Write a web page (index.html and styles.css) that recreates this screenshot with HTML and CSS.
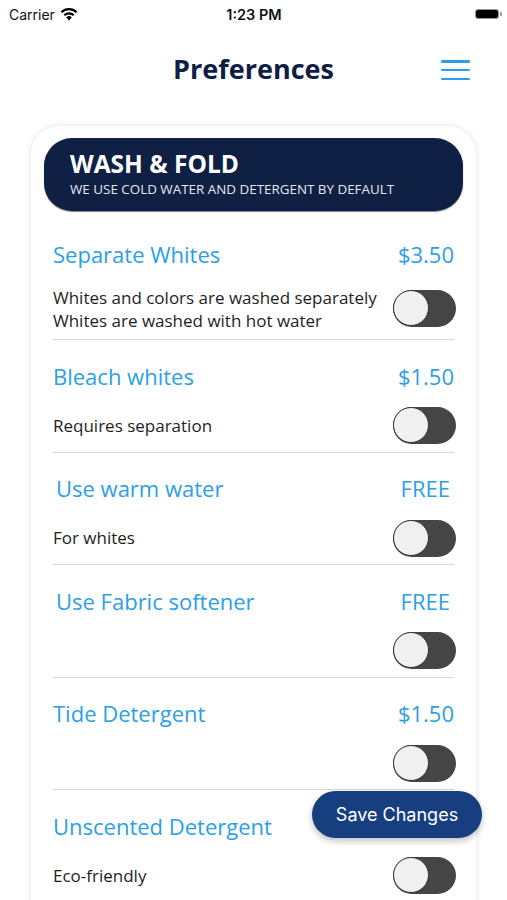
FILE: index.html
```html
<!DOCTYPE html>
<html lang="en">
<head>
    <meta charset="UTF-8">
    <meta name="viewport" content="width=device-width, initial-scale=1.0">
    <title>Preferences</title>
    <link rel="stylesheet" href="styles.css">
</head>
<body>
    <div class="status-bar">
        <div class="carrier">
            Carrier
            <svg class="wifi" width="18" height="13" viewBox="0 0 18 13">
                <path d="M9 12.5 L6.2 9.4 A4 4 0 0 1 11.8 9.4 Z" fill="#000"/>
                <path d="M4.3 7.3 A6.8 6.8 0 0 1 13.7 7.3" stroke="#000" stroke-width="2.2" fill="none"/>
                <path d="M1.4 4.3 A10.8 10.8 0 0 1 16.6 4.3" stroke="#000" stroke-width="2.2" fill="none"/>
            </svg>
        </div>
        <div class="time">1:23 PM</div>
        <div class="battery"><span></span></div>
    </div>

    <header class="nav">
        <h1>Preferences</h1>
        <button class="menu" aria-label="Menu">
            <span></span><span></span><span></span>
        </button>
    </header>

    <main class="card">
        <div class="card-header">
            <h2>WASH &amp; FOLD</h2>
            <p>WE USE COLD WATER AND DETERGENT BY DEFAULT</p>
        </div>

        <div class="option">
            <div class="option-title"><span>Separate Whites</span><span>$3.50</span></div>
            <div class="option-body">
                <p>Whites and colors are washed separately<br>Whites are washed with hot water</p>
                <label class="toggle"><input type="checkbox"><span></span></label>
            </div>
        </div>

        <div class="option">
            <div class="option-title"><span>Bleach whites</span><span>$1.50</span></div>
            <div class="option-body">
                <p>Requires separation</p>
                <label class="toggle"><input type="checkbox"><span></span></label>
            </div>
        </div>

        <div class="option indent">
            <div class="option-title"><span>Use warm water</span><span>FREE</span></div>
            <div class="option-body">
                <p>For whites</p>
                <label class="toggle"><input type="checkbox"><span></span></label>
            </div>
        </div>

        <div class="option indent">
            <div class="option-title"><span>Use Fabric softener</span><span>FREE</span></div>
            <div class="option-body">
                <p></p>
                <label class="toggle"><input type="checkbox"><span></span></label>
            </div>
        </div>

        <div class="option">
            <div class="option-title"><span>Tide Detergent</span><span>$1.50</span></div>
            <div class="option-body">
                <p></p>
                <label class="toggle"><input type="checkbox"><span></span></label>
            </div>
        </div>

        <div class="option">
            <div class="option-title"><span>Unscented Detergent</span><span></span></div>
            <div class="option-body">
                <p>Eco-friendly</p>
                <label class="toggle"><input type="checkbox"><span></span></label>
            </div>
        </div>
    </main>

    <button class="save">Save Changes</button>
</body>
</html>
```

FILE: styles.css
```css
body {
    margin: 0;
    height: 900px;
    overflow: hidden;
    background: #fff;
    font-family: "Open Sans", sans-serif;
    position: relative;
}

/* status bar */
.status-bar {
    display: flex;
    justify-content: space-between;
    align-items: center;
    height: 28px;
    padding: 0 8px 0 9px;
    font-family: Inter, "Liberation Sans", sans-serif;
    font-size: 14px;
    color: #111;
}
.carrier {
    display: flex;
    align-items: center;
    gap: 5px;
    width: 120px;
}
.time {
    font-weight: 600;
    font-size: 14.5px;
}
.battery {
    width: 120px;
    display: flex;
    justify-content: flex-end;
}
.battery span {
    display: block;
    width: 22px;
    height: 8px;
    background: #000;
    border: 1.5px solid #999;
    border-radius: 3px;
    position: relative;
}
.battery span::after {
    content: "";
    position: absolute;
    right: -4px;
    top: 2px;
    width: 2px;
    height: 4px;
    background: #999;
    border-radius: 0 1px 1px 0;
}

/* nav */
.nav {
    height: 82px;
    display: flex;
    align-items: center;
    justify-content: center;
    position: relative;
}
.nav h1 {
    margin: 0;
    font-size: 27px;
    font-weight: 700;
    color: #101d44;
    margin-top: -1px;
}
.menu {
    position: absolute;
    right: 37px;
    top: 32px;
    width: 29px;
    height: 20px;
    padding: 0;
    border: none;
    background: none;
    display: flex;
    flex-direction: column;
    justify-content: space-between;
}
.menu span {
    display: block;
    height: 2.5px;
    width: 100%;
    background: #2b9fe4;
    border-radius: 1px;
}

/* card */
.card {
    margin: 16px 31px 0;
    padding: 12px 13px 0;
    background: #fff;
    border-radius: 28px;
    box-shadow: 0 0 6px rgba(0, 0, 0, 0.12);
    height: 900px;
}
.card-header {
    background: #101f44;
    border-radius: 28px;
    height: 73px;
    box-sizing: border-box;
    padding: 10px 26px 0;
    color: #fff;
    box-shadow: 0 1px 1px rgba(0, 0, 0, 0.5);
}
.card-header h2 {
    margin: 0;
    font-size: 24.5px;
    font-weight: 700;
    line-height: 32px;
}
.card-header p {
    margin: 0;
    font-size: 13.4px;
    line-height: 18px;
    color: #e6e8ee;
}

.option {
    margin: 0 9px;
    padding: 20.5px 0 7.5px;
    border-bottom: 1px solid #d6d6d6;
}
.card-header + .option {
    padding-top: 28px;
}
.card-header + .option .option-body p {
    line-height: 23px;
}
.option-title {
    display: flex;
    justify-content: space-between;
    align-items: center;
    height: 30px;
    font-size: 22px;
    color: #2ba0e6;
}
.indent .option-title {
    padding: 0 4px 0 3px;
}
.option-body {
    display: flex;
    justify-content: space-between;
    align-items: center;
    margin-top: 16.5px;
    min-height: 37px;
}
.option-body p {
    margin: 0;
    font-size: 17px;
    line-height: 24px;
    color: #1e1e1e;
}

/* toggle */
.toggle {
    position: relative;
    width: 63px;
    height: 37px;
    flex-shrink: 0;
    margin-right: -2px;
}
.toggle input {
    display: none;
}
.toggle span {
    position: absolute;
    inset: 0;
    background: #454545;
    border-radius: 19px;
}
.toggle span::before {
    content: "";
    position: absolute;
    left: 0;
    top: 0;
    width: 34px;
    height: 34px;
    border: 1.5px solid #333;
    background: #f0f0f0;
    border-radius: 50%;
}

/* save button */
.save {
    position: absolute;
    left: 312px;
    top: 791px;
    width: 170px;
    height: 47px;
    border: none;
    border-radius: 24px;
    background: #173f80;
    color: #fff;
    font-family: Inter, "Liberation Sans", sans-serif;
    font-size: 18px;
    box-shadow: 0 3px 6px rgba(0, 0, 0, 0.25);
}
```
